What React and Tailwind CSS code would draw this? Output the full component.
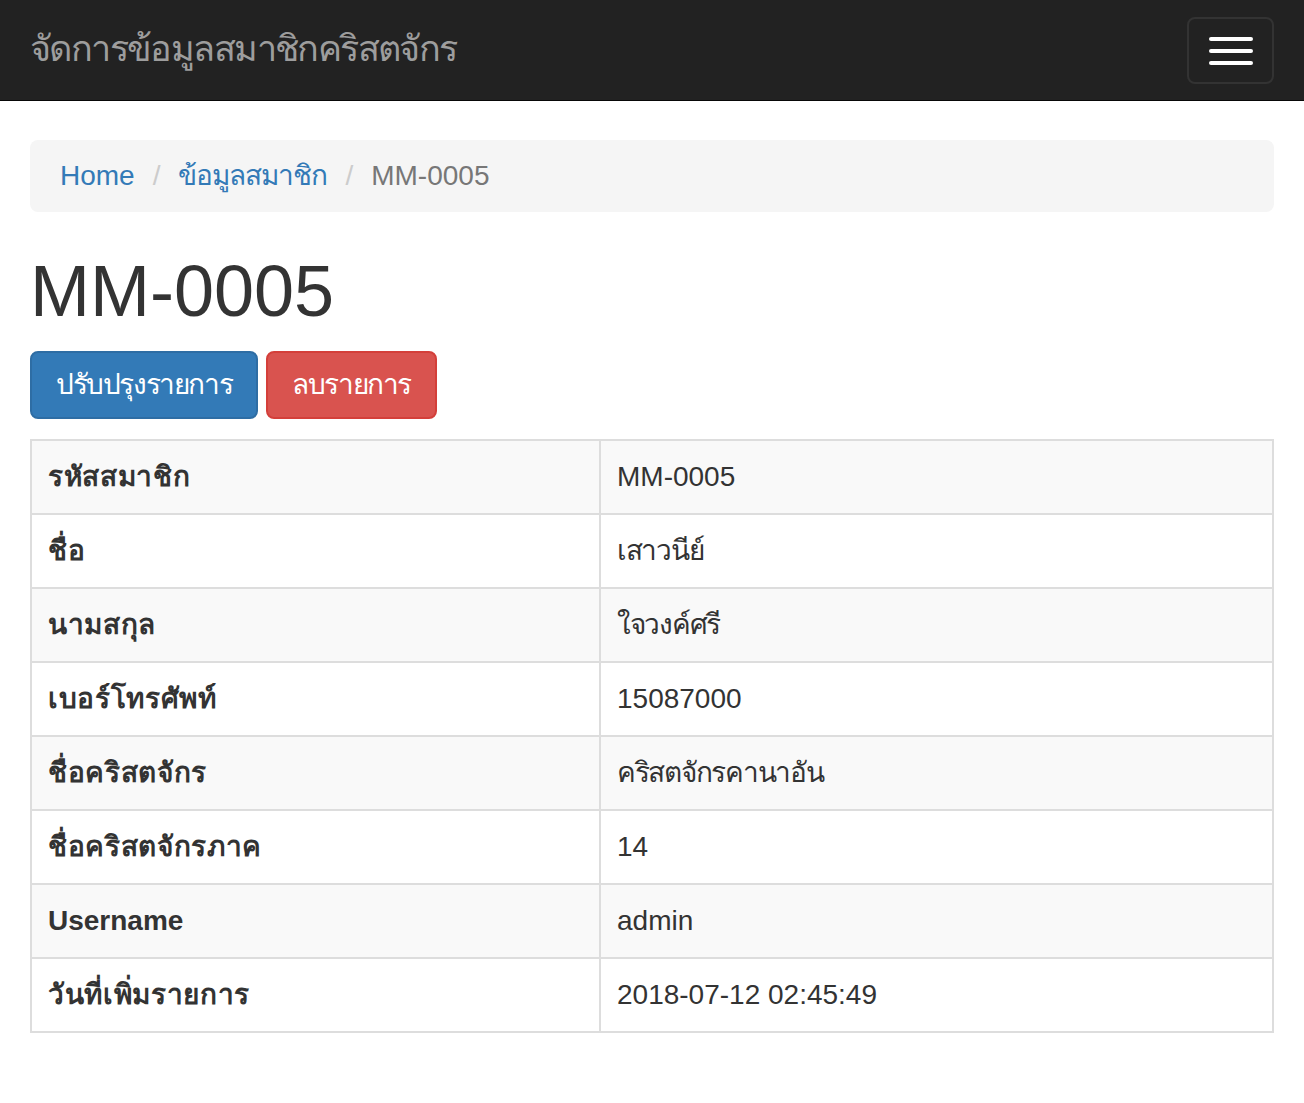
import React from 'react';

// [label, value, value is Thai]
const rows = [
  ['รหัสสมาชิก', 'MM-0005', false],
  ['ชื่อ', 'เสาวนีย์', true],
  ['นามสกุล', 'ใจวงค์ศรี', true],
  ['เบอร์โทรศัพท์', '15087000', false],
  ['ชื่อคริสตจักร', 'คริสตจักรคานาอัน', true],
  ['ชื่อคริสตจักรภาค', '14', false],
  ['Username', 'admin', false],
  ['วันที่เพิ่มรายการ', '2018-07-12 02:45:49', false],
];

const App = () => {
  return (
    <div className="min-h-screen bg-white text-[#333] text-[28px] leading-[40px] font-['Liberation_Sans',Arial,sans-serif]">
      {/* Navbar */}
      <nav className="h-[101px] bg-[#222] border-b border-[#080808] flex items-start justify-between px-[30px] mb-[39px]">
        <a href="#" className="mt-[29px] text-[36px] leading-[40px] text-[#9d9d9d] tracking-[-0.044em]">
          จัดการข้อมูลสมาชิกคริสตจักร
        </a>
        <button className="mt-[17px] w-[87px] h-[67px] border-2 border-[#333] rounded-[8px] flex flex-col items-center justify-center gap-[8px]">
          <span className="block w-[44px] h-[4px] rounded-[2px] bg-white"></span>
          <span className="block w-[44px] h-[4px] rounded-[2px] bg-white"></span>
          <span className="block w-[44px] h-[4px] rounded-[2px] bg-white"></span>
        </button>
      </nav>

      <div className="px-[30px]">
        {/* Breadcrumb */}
        <ol className="flex items-center bg-[#f5f5f5] rounded-[8px] px-[30px] py-[16px] mb-[40px]">
          <li>
            <a href="#" className="text-[#337ab7]">Home</a>
          </li>
          <li className="px-[18px] text-[#ccc]">/</li>
          <li>
            <a href="#" className="text-[#337ab7] tracking-[-0.036em]">ข้อมูลสมาชิก</a>
          </li>
          <li className="px-[18px] text-[#ccc]">/</li>
          <li className="text-[#777]">MM-0005</li>
        </ol>

        <h1 className="text-[72px] leading-[79px] font-medium mb-[20px]">MM-0005</h1>

        <div className="flex gap-[8px] mb-[20px]">
          <button className="bg-[#337ab7] border-2 border-[#2e6da4] text-white rounded-[8px] px-[24px] py-[12px] tracking-[-0.05em]">
            ปรับปรุงรายการ
          </button>
          <button className="bg-[#d9534f] border-2 border-[#d43f3a] text-white rounded-[8px] px-[24px] py-[12px] tracking-[-0.05em]">
            ลบรายการ
          </button>
        </div>

        {/* Detail table */}
        <table className="w-full border-collapse border-2 border-[#ddd] table-fixed">
          <colgroup>
            <col className="w-[569px]" />
            <col />
          </colgroup>
          <tbody>
            {rows.map(([label, value, thai], i) => (
              <tr key={label} className={i % 2 === 0 ? 'bg-[#f9f9f9]' : 'bg-white'}>
                <th className={'border-2 border-[#ddd] p-[16px] text-left font-bold ' + (label === 'Username' ? '' : 'tracking-[0.024em]')}>
                  {label}
                </th>
                <td className={'border-2 border-[#ddd] p-[16px] ' + (thai ? 'tracking-[-0.045em]' : '')}>{value}</td>
              </tr>
            ))}
          </tbody>
        </table>
      </div>
    </div>
  );
};

export default App;
